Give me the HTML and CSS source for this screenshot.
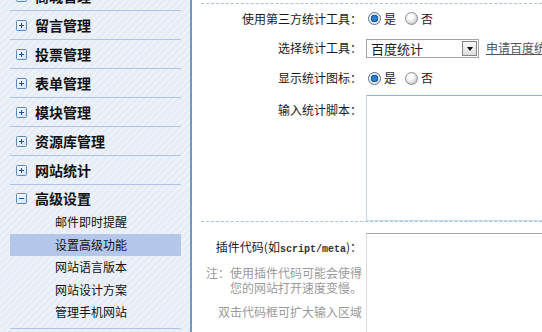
FILE: index.html
```html
<!DOCTYPE html>
<html lang="zh-CN">
<head>
<meta charset="utf-8">
<title>设置高级功能</title>
<link rel="stylesheet" href="styles.css">
</head>
<body>
<aside class="sidebar">
  <ul class="menu">
    <li class="group"><div class="group-head"><svg class="toggle" viewBox="0 0 11 11"><rect x="0.5" y="0.5" width="10" height="10" rx="1" fill="url(#g)" stroke="#5a88bd"/><path d="M3 5.5h5M5.5 3v5" stroke="#1f4f8a" stroke-width="1"/></svg>商城管理</div></li>
    <li class="group"><div class="group-head"><svg class="toggle" viewBox="0 0 11 11"><defs><linearGradient id="g" x1="0" y1="0" x2="1" y2="1"><stop offset="0" stop-color="#ffffff"/><stop offset="1" stop-color="#cfe0f3"/></linearGradient></defs><rect x="0.5" y="0.5" width="10" height="10" rx="1" fill="url(#g)" stroke="#5a88bd"/><path d="M3 5.5h5M5.5 3v5" stroke="#1f4f8a" stroke-width="1"/></svg>留言管理</div></li>
    <li class="group"><div class="group-head"><svg class="toggle" viewBox="0 0 11 11"><rect x="0.5" y="0.5" width="10" height="10" rx="1" fill="url(#g)" stroke="#5a88bd"/><path d="M3 5.5h5M5.5 3v5" stroke="#1f4f8a" stroke-width="1"/></svg>投票管理</div></li>
    <li class="group"><div class="group-head"><svg class="toggle" viewBox="0 0 11 11"><rect x="0.5" y="0.5" width="10" height="10" rx="1" fill="url(#g)" stroke="#5a88bd"/><path d="M3 5.5h5M5.5 3v5" stroke="#1f4f8a" stroke-width="1"/></svg>表单管理</div></li>
    <li class="group"><div class="group-head"><svg class="toggle" viewBox="0 0 11 11"><rect x="0.5" y="0.5" width="10" height="10" rx="1" fill="url(#g)" stroke="#5a88bd"/><path d="M3 5.5h5M5.5 3v5" stroke="#1f4f8a" stroke-width="1"/></svg>模块管理</div></li>
    <li class="group"><div class="group-head"><svg class="toggle" viewBox="0 0 11 11"><rect x="0.5" y="0.5" width="10" height="10" rx="1" fill="url(#g)" stroke="#5a88bd"/><path d="M3 5.5h5M5.5 3v5" stroke="#1f4f8a" stroke-width="1"/></svg>资源库管理</div></li>
    <li class="group"><div class="group-head"><svg class="toggle" viewBox="0 0 11 11"><rect x="0.5" y="0.5" width="10" height="10" rx="1" fill="url(#g)" stroke="#5a88bd"/><path d="M3 5.5h5M5.5 3v5" stroke="#1f4f8a" stroke-width="1"/></svg>网站统计</div></li>
    <li class="group open"><div class="group-head"><svg class="toggle" viewBox="0 0 11 11"><rect x="0.5" y="0.5" width="10" height="10" rx="1" fill="url(#g)" stroke="#5a88bd"/><path d="M3 5.5h5" stroke="#1f4f8a" stroke-width="1"/></svg>高级设置</div>
      <ul class="sub">
        <li>邮件即时提醒</li>
        <li class="active">设置高级功能</li>
        <li>网站语言版本</li>
        <li>网站设计方案</li>
        <li>管理手机网站</li>
      </ul>
    </li>
  </ul>
</aside>
<main class="main">
  <section class="section section-stats">
    <div class="row">
      <span class="label">使用第三方统计工具：</span>
      <span class="radio checked"></span><span class="opt">是</span>
      <span class="radio"></span><span class="opt">否</span>
    </div>
    <div class="row">
      <span class="label">选择统计工具：</span>
      <div class="select"><span class="select-text">百度统计</span><span class="select-btn"><i class="arrow"></i></span></div>
      <a class="link" href="#">申请百度统计</a>
    </div>
    <div class="row">
      <span class="label">显示统计图标：</span>
      <span class="radio checked"></span><span class="opt">是</span>
      <span class="radio"></span><span class="opt">否</span>
    </div>
    <div class="row row-top row-script">
      <span class="label label-top">输入统计脚本：</span>
      <textarea class="area area-script"></textarea>
    </div>
  </section>
  <section class="section section-plugin">
    <div class="row row-top">
      <div class="label-col">
        <div class="label label-top">插件代码(如<code class="code">script/meta</code>)：</div>
        <p class="note">注：使用插件代码可能会使得<br>您的网站打开速度变慢。</p>
        <p class="note note-gap">双击代码框可扩大输入区域</p>
      </div>
      <textarea class="area area-plugin"></textarea>
    </div>
  </section>
</main>
</body>
</html>
```
FILE: styles.css
```css
html, body {
  margin: 0;
  padding: 0;
}
body {
  width: 542px;
  height: 332px;
  overflow: hidden;
  display: flex;
  font-family: "Noto Sans CJK SC", "Noto Sans", sans-serif;
  font-size: 12px;
  color: #1a1a1a;
  background: #fff;
}

/* ---------- sidebar ---------- */
.sidebar {
  flex: none;
  width: 192px;
  height: 332px;
  box-sizing: border-box;
  padding: 0 9px 0 10px;
  border-right: 2px solid #6f98c2;
  background-color: #e8eff8;
  background-image: repeating-linear-gradient(135deg, #e6edf7 0 3px, #eef3fa 3px 5px);
  overflow: hidden;
}
.menu, .sub {
  list-style: none;
  margin: 0;
  padding: 0;
}
.menu {
  margin-top: -18px;
}
.group {
  border-bottom: 1px solid #aec4ea;
}
.group-head {
  display: flex;
  align-items: center;
  height: 28px;
  padding-left: 6px;
  font-size: 14px;
  font-weight: 700;
  color: #111;
}
.open .group-head {
  height: 26px;
}
.toggle {
  width: 11px;
  height: 11px;
  margin-right: 8px;
  flex: none;
}
.sub {
  padding-bottom: 4px;
}
.sub li {
  height: 22.6px;
  line-height: 22.6px;
  padding-left: 45px;
  font-size: 12px;
  color: #111;
}
.sub li.active {
  background: #b4c7ea;
}

/* ---------- main ---------- */
.main {
  flex: 1;
  min-width: 0;
  overflow: hidden;
  background: #fff;
}
.section {
  margin-left: 9px;
  border-top: 1px dashed #a9c3da;
  white-space: nowrap;
}
.section-stats {
  margin-top: 3px;
}
.row {
  display: flex;
  align-items: center;
  height: 30px;
}
.row:first-child {
  height: 29px;
}
.row-top {
  align-items: flex-start;
  height: auto;
}
.row-script {
  margin-top: 2px;
}
.label {
  flex: none;
  width: 161px;
  margin-right: 4px;
  text-align: right;
  line-height: 14px;
  color: #1a1a1a;
}
.label-top {
  padding-top: 8px;
}
.label-col {
  flex: none;
  width: 161px;
  margin-right: 4px;
  text-align: right;
}
.label-col .label {
  width: auto;
  margin-right: 0;
  padding-top: 7px;
}
.code {
  font-family: "Liberation Mono", monospace;
  font-size: 10px;
  font-weight: 700;
  color: #333;
}
.note {
  margin: 8px 0 0;
  line-height: 15px;
  color: #9a9a9a;
}
.note-gap {
  margin-top: 9px;
}

/* radio */
.radio {
  flex: none;
  width: 11px;
  height: 11px;
  margin-left: 2px;
  border-radius: 50%;
  border: 1px solid #8a8f96;
  background: radial-gradient(circle at 40% 35%, #ffffff 0 2px, #e6e6e6 5px, #c9c9c9 7px);
  position: relative;
}
.radio + .opt + .radio {
  margin-left: 9px;
}
.radio.checked {
  border-color: #59708a;
  background: radial-gradient(circle at 50% 50%, #2d7fd0 0 2px, #0d4f99 3.5px, #dfe6ee 4px, #f4f6f8 6px);
}
.opt {
  margin-left: 3px;
  line-height: 14px;
}

/* select */
.select {
  flex: none;
  display: flex;
  align-items: center;
  width: 113px;
  height: 19px;
  box-sizing: border-box;
  border: 1px solid #a5a5a5;
  background: #fff;
  margin-top: 1px;
}
.select-text {
  flex: 1;
  padding-left: 4px;
  font-size: 13px;
  line-height: 14px;
}
.select-btn {
  flex: none;
  width: 15px;
  height: 15px;
  margin-right: 1px;
  box-sizing: border-box;
  border: 1px solid #858585;
  background: linear-gradient(#fafafa, #dcdcdc);
  display: flex;
  align-items: center;
  justify-content: center;
}
.arrow {
  width: 0;
  height: 0;
  border-left: 3.5px solid transparent;
  border-right: 3.5px solid transparent;
  border-top: 4px solid #111;
}
.link {
  margin-left: 7px;
  color: #555;
  text-decoration: underline;
  line-height: 14px;
}

/* textareas */
.area {
  flex: none;
  display: block;
  margin: 0;
  padding: 0;
  resize: none;
  outline: none;
  width: 300px;
  box-sizing: border-box;
  background: #fff;
  font: inherit;
}
.area-script {
  height: 126px;
  border: 1px solid #c4d9ee;
  border-top-color: #8fb1d4;
}
.area-plugin {
  height: 140px;
  border: 1px solid #dcdcdc;
  border-top-color: #a6a6a6;
}
.section-plugin {
  padding-top: 11px;
}
```
